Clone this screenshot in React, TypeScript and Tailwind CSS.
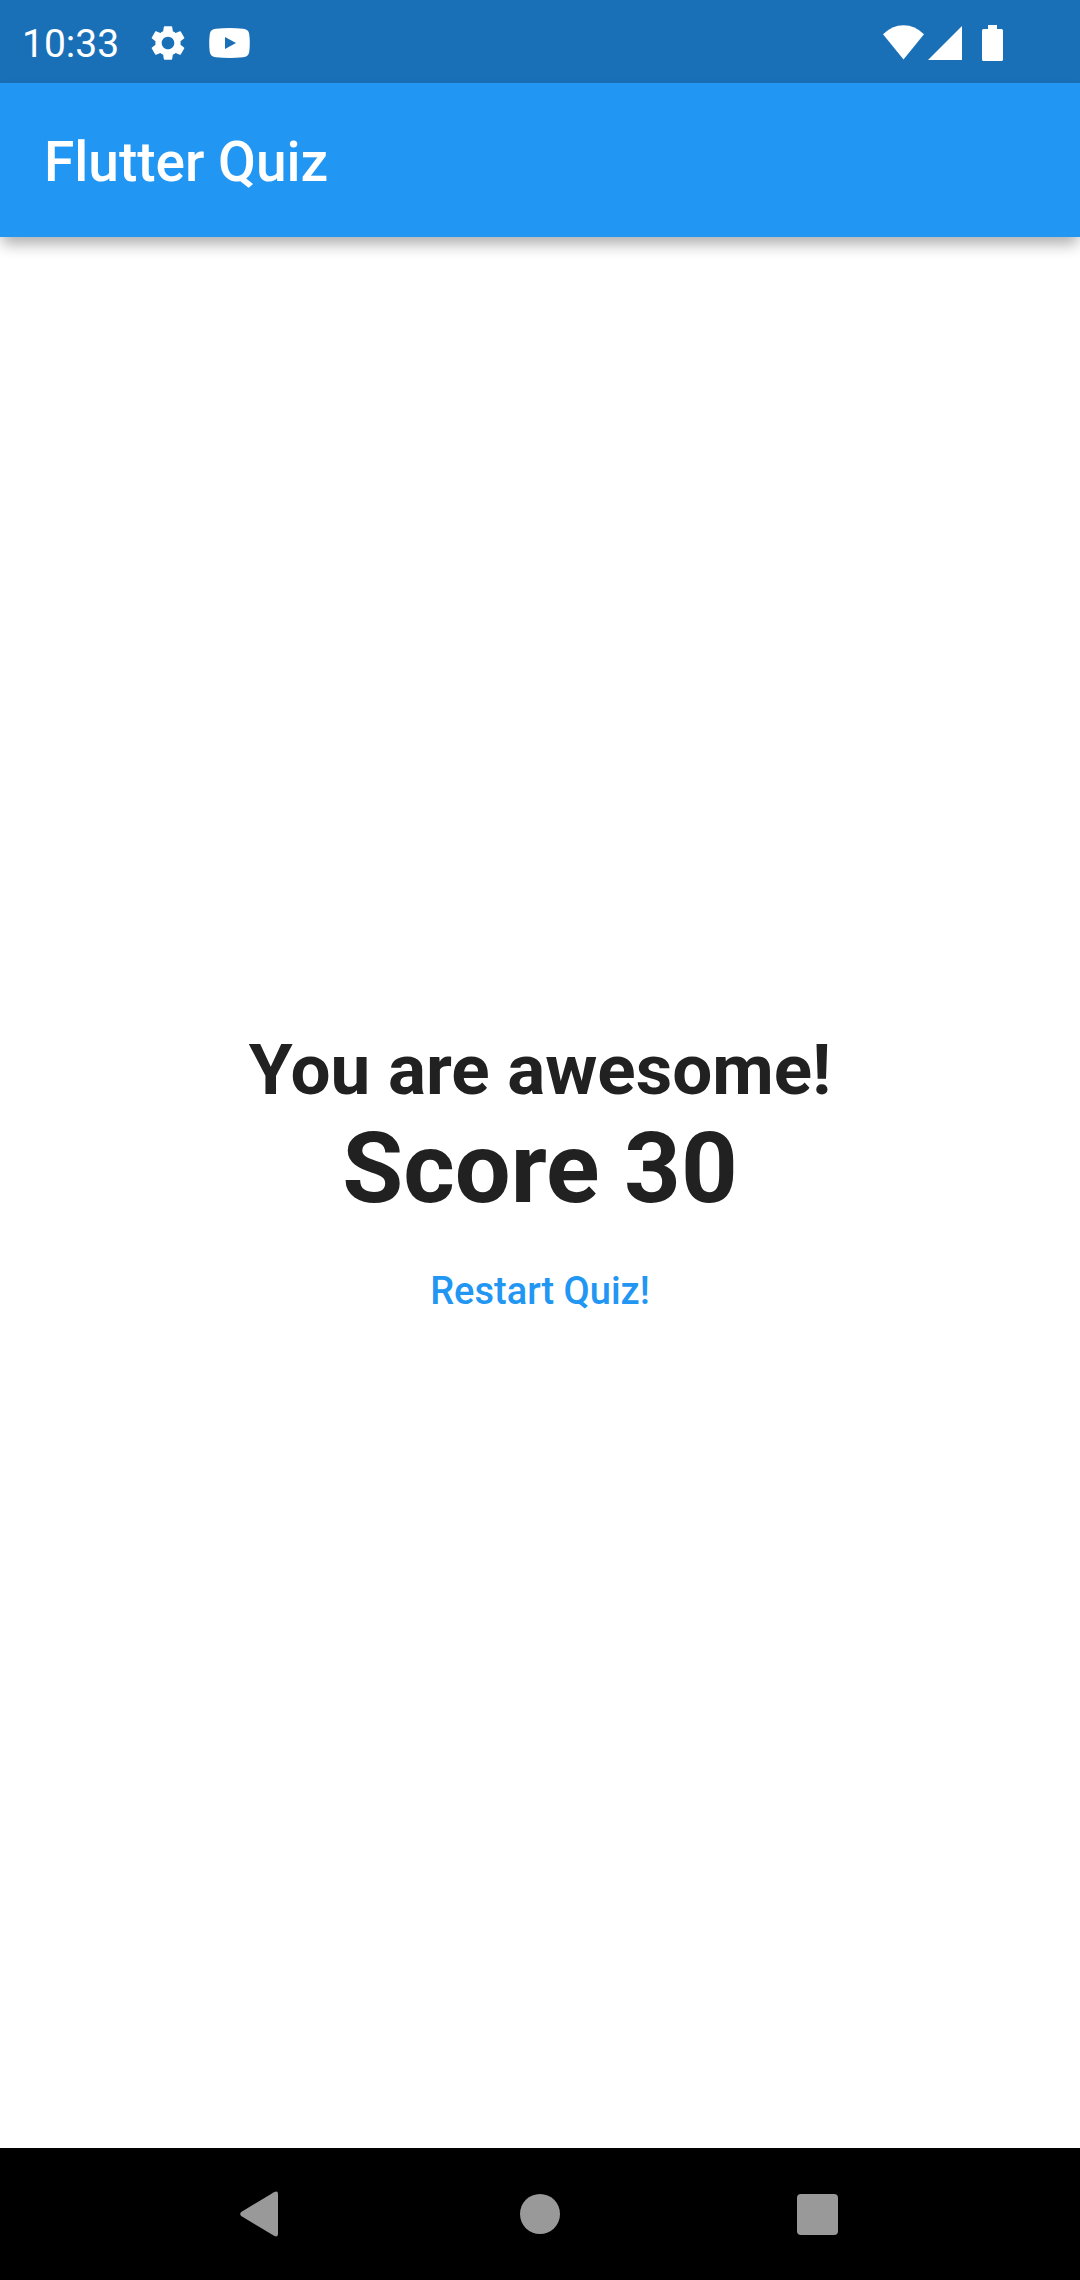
import { MdSettings } from "react-icons/md";

function StatusBar() {
  return (
    <div className="flex h-[83px] shrink-0 items-center justify-between bg-[#1a70b7] pt-[3px] pr-[76px] pl-[22px] text-white">
      <div className="flex items-center">
        <span className="pt-[2px] text-[39px] leading-[46px]">10:33</span>
        <MdSettings className="ml-7 size-[42px]" aria-hidden="true" />
        <svg className="ml-5 h-[30px] w-[41px]" viewBox="0 0 41 30" fill="currentColor" aria-hidden="true">
          <path
            fillRule="evenodd"
            d="M7 .7Q20.500 -.5 34 .7Q39.500 1 40.200 6Q41.400 15 40.200 24Q39.500 29 34 29.300Q20.500 30.500 7 29.300Q1.500 29 .8 24Q-.4 15 .8 6Q1.500 1 7 .7ZM16 9V21L27 15Z"
          />
        </svg>
      </div>
      <svg className="h-9 w-[121px]" viewBox="0 0 121 36" fill="currentColor" aria-hidden="true">
        <path d="M0 9.300Q9 .3 20.500 .3T41 9.300L20.500 34.500Z" />
        <path d="M79 1V35H45Z" />
        <path d="M105 0H114V4H118.500Q120 4 120 5.500V34.500Q120 36 118.500 36H100.500Q99 36 99 34.500V5.500Q99 4 100.500 4H105Z" />
      </svg>
    </div>
  );
}

function NavigationBar() {
  return (
    <nav className="flex h-[132px] shrink-0 items-center justify-center gap-[185px] bg-black text-[#999999]">
      <button type="button" aria-label="Back" className="flex size-[92px] items-center justify-center">
        <svg className="size-[46px]" viewBox="0 0 46 46" fill="currentColor" aria-hidden="true">
          <path d="M1.200 21L34 1.200Q38 -.8 38 3V43Q38 46.800 34 44.800L1.200 25Q-.8 23 1.200 21Z" />
        </svg>
      </button>
      <button type="button" aria-label="Home" className="flex size-[92px] items-center justify-center">
        <span className="size-10 rounded-full bg-current" />
      </button>
      <button type="button" aria-label="Overview" className="flex size-[92px] items-center justify-center">
        <span className="size-[41px] rounded-[4px] bg-current" />
      </button>
    </nav>
  );
}

export default function App() {
  return (
    <div className="flex min-h-screen flex-col bg-white font-['Roboto',sans-serif]">
      <StatusBar />
      <header className="flex h-[154px] shrink-0 items-center bg-[#2196f3] px-11 pt-[3px] shadow-[0_9px_14px_-2px_rgba(0,0,0,0.32)]">
        <h1 className="text-[55px] leading-[64px] font-medium text-white">Flutter Quiz</h1>
      </header>
      <main className="flex flex-1 flex-col items-center justify-center text-center text-[#212121]">
        <h2 className="text-[71px] leading-[82px] font-bold">You are awesome!</h2>
        <p className="text-[99px] leading-[114px] font-bold">Score 30</p>
        <button type="button" className="h-[132px] px-6 text-[38px] leading-[46px] font-medium text-[#2196f3]">
          Restart Quiz!
        </button>
      </main>
      <NavigationBar />
    </div>
  );
}
